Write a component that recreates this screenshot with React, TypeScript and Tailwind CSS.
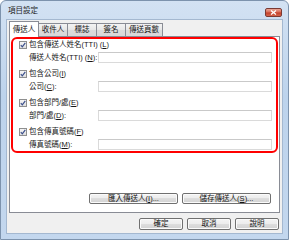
import type { ReactNode } from 'react'

const U = ({ children }: { children: ReactNode }) => <span className="underline underline-offset-[1px]">{children}</span>

const BTN =
  'flex h-[11px] items-center justify-center rounded-[2px] border border-[#707070] bg-[linear-gradient(to_bottom,#f4f4f4_0%,#ececec_50%,#dedede_50%,#d2d2d2_100%)] shadow-[inset_0_0_0_1px_#fbfbfb] leading-none'

function Check({ label }: { label: ReactNode }) {
  return (
    <div className="flex h-[12px] items-center pl-[6px]">
      <div className="flex h-[8px] w-[8px] items-center justify-center border border-[#8e8f8f] bg-[linear-gradient(to_bottom,#f6f6f6,#dedede)]">
        <svg width="6" height="6" viewBox="0 0 6 6">
          <path d="M0.8 3.2 L2.3 4.8 L5.3 0.8" fill="none" stroke="#3b4f8c" strokeWidth="1.2" />
        </svg>
      </div>
      <span className="ml-[2px] leading-none">{label}</span>
    </div>
  )
}

function Field({ label }: { label: ReactNode }) {
  return (
    <div className="flex h-[13px] items-center pl-[16px] pr-[4px]">
      <span className="w-[69px] shrink-0 leading-none">{label}</span>
      <div className="h-[11px] flex-1 border border-[#dadada] border-t-[#c9c9c9] bg-white" />
    </div>
  )
}

const GROUPS = [
  { check: <>包含傳送人姓名(TTI) (<U>L</U>)</>, field: <>傳送人姓名(TTI) (<U>N</U>):</> },
  { check: <>包含公司(<U>I</U>)</>, field: <>公司(<U>C</U>):</> },
  { check: <>包含部門/處(<U>E</U>)</>, field: <>部門/處(<U>D</U>):</> },
  { check: <>包含傳真號碼(<U>F</U>)</>, field: <>傳真號碼(<U>M</U>):</> },
]

const TABS = [
  { label: '收件人', w: 'w-[30px]' },
  { label: '標誌', w: 'w-[30px]' },
  { label: '簽名', w: 'w-[30px]' },
  { label: '傳送頁數', w: 'w-[38px]' },
]

export default function App() {
  return (
    <div className="flex h-[240px] w-[289px] flex-col rounded-t-[6px] border border-[#7d93ad] bg-[linear-gradient(to_bottom,#d3e2f3,#bdd3ec_40%,#c3d7ee)] font-['Liberation_Sans','Noto_Sans_CJK_TC',sans-serif] text-[7.5px] text-[#151515]">
      {/* title bar */}
      <div className="flex h-[18px] shrink-0 pl-[7px] pr-[6px]">
        <span className="mt-[5px] leading-[10px] text-[#1e1e1e]">項目設定</span>
        <div className="ml-auto mt-[7px] flex h-[9px] w-[17px] items-center justify-center rounded-[2px] border border-[#7a3a33] bg-[linear-gradient(to_bottom,#eaa898,#d86a55_45%,#c3402a_55%,#d4654d)]">
          <svg width="7" height="5" viewBox="0 0 7 5">
            <path d="M1 0.5 L6 4.5 M6 0.5 L1 4.5" stroke="#ffffff" strokeWidth="1.3" />
          </svg>
        </div>
      </div>

      {/* client area */}
      <div className="mx-[5px] mb-[5px] flex flex-1 flex-col border border-[#a4b8d0] bg-[#f0f0f0] px-[2px] pt-[1px]">
        <div className="relative z-10 flex h-[15px] items-end">
          <div className="relative z-10 -mb-px flex h-[16px] w-[30px] items-center justify-center border border-b-0 border-[#898c95] bg-white leading-none">
            傳送人
          </div>
          {TABS.map(t => (
            <div
              key={t.label}
              className={`-ml-px flex h-[13px] ${t.w} items-center justify-center border border-b-0 border-[#898c95] bg-[linear-gradient(to_bottom,#f3f3f3,#e6e6e6_50%,#dcdcdc_50%,#d8d8d8)] leading-none`}
            >
              {t.label}
            </div>
          ))}
        </div>

        <div className="flex flex-1 flex-col border border-[#898c95] bg-white">
          <div className="mx-[1px] flex flex-col gap-[4px] rounded-[6px] border-2 border-[#ff0000]">
            {GROUPS.map((g, i) => (
              <div key={i} className="flex flex-col">
                <Check label={g.check} />
                <Field label={g.field} />
              </div>
            ))}
          </div>

          <div className="mt-auto flex justify-end gap-[4px] pb-[8px] pr-[8px]">
            <div className={`${BTN} w-[89px]`}>匯入傳送人(<U>I</U>)...</div>
            <div className={`${BTN} w-[89px]`}>儲存傳送人(<U>S</U>)...</div>
          </div>
        </div>

        <div className="flex justify-end gap-[4px] pb-[3px] pr-[1px] pt-[5px]">
          <div className={`${BTN} h-[12px] w-[44px] border-[#4d84b6]`}>確定</div>
          <div className={`${BTN} h-[12px] w-[44px]`}>取消</div>
          <div className={`${BTN} h-[12px] w-[44px]`}>說明</div>
        </div>
      </div>
    </div>
  )
}
